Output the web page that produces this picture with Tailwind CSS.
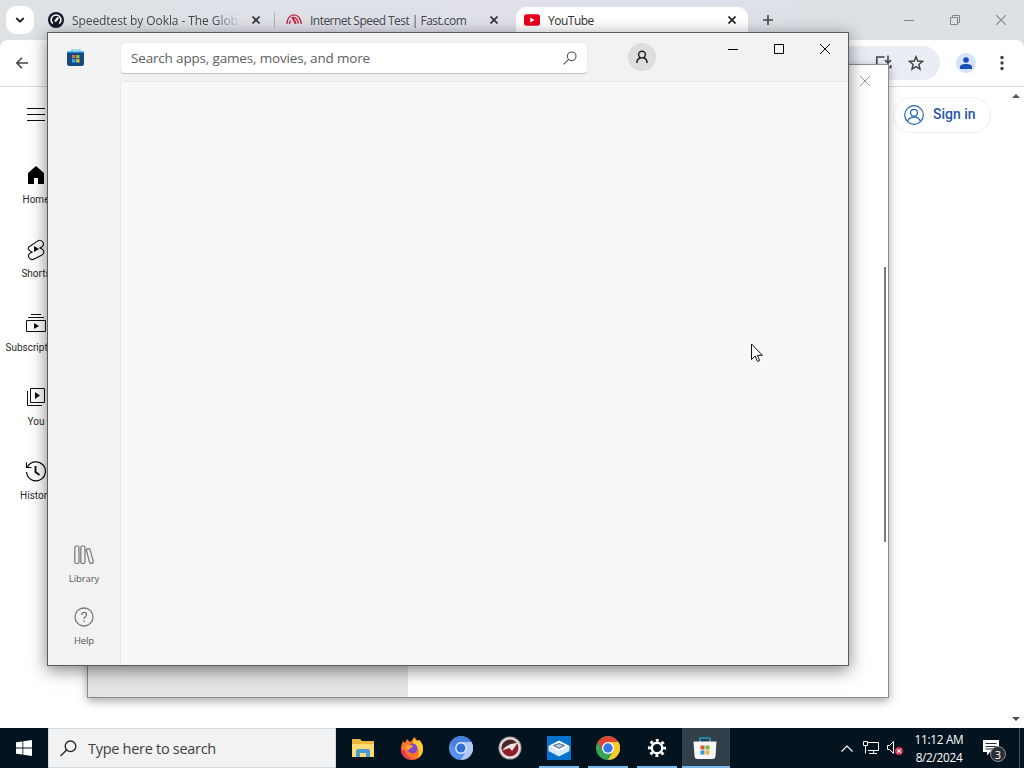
<!DOCTYPE html>
<html lang="en">
<head>
  <meta charset="UTF-8" />
  <meta name="viewport" content="width=device-width, initial-scale=1" />
  <title>Desktop</title>
  <script src="https://cdn.jsdelivr.net/npm/@tailwindcss/browser@4"></script>
</head>
<body class="overflow-hidden font-['Open_Sans','Noto_Sans',sans-serif]">
  <div class="relative flex h-[768px] w-[1024px] flex-col overflow-hidden bg-white">

    <!-- Browser tab strip -->
    <header class="flex h-10 shrink-0 items-start bg-gradient-to-r from-[#dee2e5] via-[#dfe0e9] to-[#dce1e3] text-[12px] text-[#45484c]">
      <button class="mt-[6px] ml-[6px] flex h-7 w-7 items-center justify-center rounded-[10px] bg-white">
        <svg class="h-3 w-3" viewBox="0 0 12 12" fill="none" stroke="#222" stroke-width="1.9"><path d="M2.3 4l3.7 3.7L9.7 4" /></svg>
      </button>
      <div class="ml-[14px] flex h-10 w-[226px] items-center">
        <svg class="h-4 w-4 shrink-0" viewBox="0 0 16 16" fill="none"><circle cx="8" cy="8" r="8" fill="#15182a" /><path d="M4.8 11.6a4.9 4.9 0 1 1 6.4 0" stroke="#fff" stroke-width="1.6" /><path d="M7 9.5l3.3-4" stroke="#fff" stroke-width="2" /></svg>
        <span class="mt-px ml-2 w-[168px] whitespace-nowrap tracking-[-0.08px] [mask-image:linear-gradient(to_right,#000_85%,transparent)]">Speedtest by Ookla - The Glob</span>
        <svg class="ml-3 h-2 w-2" viewBox="0 0 8 8" stroke="#333" stroke-width="1.6"><path d="M.5.5l7 7M7.5.5l-7 7" /></svg>
      </div>
      <div class="mt-3 h-4 w-px bg-[#b4b8bb]"></div>
      <div class="ml-[11px] flex h-10 w-[230px] items-center">
        <svg class="h-4 w-4 shrink-0" viewBox="0 0 16 16" fill="none" stroke="#c4203f" stroke-width="1.3"><path d="M.8 12C1.200 6 4.500 2.800 8 2.800S14.800 6 15.300 12" /><path d="M5.500 5.800c3.500-1.500 6 1 7 5.700M4.500 8.500L3.300 12" /><path d="M6.500 5.500l3.300 6.200" stroke-width="2" /></svg>
        <span class="mt-px ml-2 w-[172px] whitespace-nowrap tracking-[-0.53px]">Internet Speed Test | Fast.com</span>
        <svg class="ml-2 h-2 w-2" viewBox="0 0 8 8" stroke="#333" stroke-width="1.6"><path d="M.5.5l7 7M7.5.5l-7 7" /></svg>
      </div>
      <div class="mt-[7px] flex h-[33px] w-[232px] items-center rounded-t-[10px] bg-white px-2 pb-[7px] text-[#333]">
        <svg class="h-4 w-4" viewBox="0 0 16 16"><rect y="2.3" width="16" height="11.5" rx="2.5" fill="#e8001c" /><path d="M6.3 5.5v5L10.600 8z" fill="#fff" /></svg>
        <span class="mt-px ml-2 grow tracking-[-0.5px]">YouTube</span>
        <svg class="mr-1 h-2 w-2" viewBox="0 0 8 8" stroke="#222" stroke-width="1.7"><path d="M.5.5l7 7M7.5.5l-7 7" /></svg>
      </div>
      <svg class="mt-[15px] ml-[15px] h-[10px] w-[10px]" viewBox="0 0 10 10" stroke="#444" stroke-width="1.6"><path d="M5 0v10M0 5h10" /></svg>
      <div class="mt-[15px] mr-[18px] ml-auto flex items-center gap-9 text-[#808487]">
        <svg class="h-[10px] w-[10px]" viewBox="0 0 10 10" stroke="currentColor"><path d="M0 5.5h10" /></svg>
        <svg class="h-[10px] w-[10px]" viewBox="0 0 10 10" fill="none" stroke="currentColor"><path d="M.5 2.5h7v7h-7zM2.500 2.500v-2h7v7h-2" /></svg>
        <svg class="h-[10px] w-[10px]" viewBox="0 0 10 10" stroke="currentColor" stroke-width="1.1"><path d="M0 0l10 10M10 0L0 10" /></svg>
      </div>
    </header>

    <!-- Browser toolbar -->
    <div class="flex h-[47px] shrink-0 items-center border-b border-[#d8dadd] bg-[#dde1e4]">
      <div class="flex h-full w-full items-center rounded-t-lg bg-white pl-4">
        <svg class="h-3 w-3" viewBox="0 0 12 12" fill="none" stroke="#444" stroke-width="1.5"><path d="M12 6H1M6 .8L.9 6 6 11.200" /></svg>
        <div class="ml-[60px] flex h-[34px] w-[852px] items-center justify-end gap-4 rounded-full bg-[#ebedf5] pr-4">
          <svg class="h-4 w-4" viewBox="0 0 16 16" fill="none" stroke="#444" stroke-width="1.6"><path d="M8.500 2H.8v10.500h14V10M4 15h8M12 .5v7M9 5l3 3 3-3" /></svg>
          <svg class="h-4 w-4" viewBox="0 0 16 16" fill="none" stroke="#444" stroke-width="1.5"><path d="M8 1.800l1.800 4.300 4.700.4-3.600 3 1.100 4.600L8 11.700l-4 2.400 1.100-4.600-3.600-3 4.700-.4z" /></svg>
        </div>
        <div class="ml-4 flex h-5 w-5 items-center justify-center rounded-full bg-[#d5e2fa]">
          <svg class="h-3 w-3" viewBox="0 0 12 12" fill="#1a4fb8"><circle cx="6" cy="3" r="2.800" /><path d="M0 12V9.600C0 7.900 3 7 6 7s6 .9 6 2.600V12z" /></svg>
        </div>
        <svg class="ml-6 h-4 w-[4px]" viewBox="0 0 4 16" fill="#3c4043"><circle cx="2" cy="2.500" r="1.700" /><circle cx="2" cy="8" r="1.700" /><circle cx="2" cy="13.500" r="1.700" /></svg>
      </div>
    </div>

    <!-- YouTube page -->
    <main class="flex min-h-0 grow font-[Roboto,sans-serif]">
      <nav class="flex w-[72px] flex-col items-center text-[10px] leading-[14px] text-[#2a2a2a]">
        <svg class="mt-[20px] mb-[41px] h-[15px] w-[18px] shrink-0" viewBox="0 0 18 15" stroke="#0f0f0f"><path d="M0 1.500h18M0 7.500h18M0 13.500h18" /></svg>
        <div class="flex h-[74px] flex-col items-center gap-[6px]">
          <svg class="h-6 w-6" viewBox="0 0 24 24" fill="#000"><path d="M4 10v11h6v-6h4v6h6V10l-8-7z" /></svg>
          <span>Home</span>
        </div>
        <div class="flex h-[74px] flex-col items-center gap-[6px]">
          <svg class="h-6 w-6" viewBox="0 0 24 24" fill="none" stroke="#0f0f0f" stroke-width="1.100"><path d="M6 9.200l7.800-5.300c3.900-2.100 7.800 3 4.200 5.800l-2.100 1.300 2 .9c3 1.700 2.300 4.700.1 6l-7.800 4.200c-3.900 2-7.800-3-4.200-5.800L8.100 15l-2-.9c-3-1.700-2.200-4 0-4.900z" /><path d="M10 9v6l5-3z" fill="#0f0f0f" stroke="none" /></svg>
          <span>Shorts</span>
        </div>
        <div class="flex h-[74px] flex-col items-center gap-[6px]">
          <svg class="h-6 w-6" viewBox="0 0 24 24" fill="none" stroke="#0f0f0f"><path d="M2.500 9.500h19v11h-19zM4 6.500h16M7 3.500h10" /><path d="M10 12v6l5-3z" fill="#0f0f0f" stroke="none" /></svg>
          <span>Subscriptions</span>
        </div>
        <div class="flex h-[74px] flex-col items-center gap-[6px]">
          <svg class="h-6 w-6" viewBox="0 0 24 24" fill="none" stroke="#0f0f0f"><path d="M6.500 3.500h14v14h-14zM3.500 6v14.500H18" /><path d="M11 7v7l5-3.500z" fill="#0f0f0f" stroke="none" /></svg>
          <span>You</span>
        </div>
        <div class="flex h-[74px] flex-col items-center gap-[6px]">
          <svg class="h-6 w-6" viewBox="0 0 24 24" fill="none" stroke="#0f0f0f"><path d="M3.500 8A9.500 9.500 0 1 1 2.500 13M2.500 3.500v5h5" stroke-width="1.200" /><path d="M11.500 7v6l4 3" stroke-width="1.900" /></svg>
          <span>History</span>
        </div>
      </nav>
      <div class="mt-[10px] mr-4 ml-auto flex h-9 w-[98px] items-center rounded-full border border-[#eceef0] pl-[10px]">
        <svg class="h-5 w-5" viewBox="0 0 20 20" fill="none" stroke="#2563b0" stroke-width="1.200"><circle cx="10" cy="10" r="9.300" /><circle cx="10" cy="7.800" r="3.400" /><path d="M3.600 16.600c1.300-6 11.500-6 12.800 0" /></svg>
        <span class="mb-[2px] ml-[9px] text-[14px] font-medium text-[#2456a6]">Sign in</span>
      </div>
      <div class="flex w-[17px] flex-col items-center justify-between pt-[7px] pb-[7px]">
        <svg class="h-1 w-2" viewBox="0 0 8 4" fill="#505050"><path d="M4 0l4 4H0z" /></svg>
        <svg class="h-1 w-2" viewBox="0 0 8 4" fill="#505050"><path d="M0 0h8L4 4z" /></svg>
      </div>
    </main>

    <!-- Settings window behind the store -->
    <section class="absolute top-[64px] left-[87px] flex h-[634px] w-[802px] border border-[#8c8c8c] bg-white shadow-[0_3px_9px_rgba(0,0,0,0.35)]">
      <div class="w-80 bg-[#e5e5e5]"></div>
      <div class="flex grow flex-col items-end">
        <svg class="mt-[11px] mr-[18px] h-[10px] w-[10px]" viewBox="0 0 10 10" stroke="#999"><path d="M0 0l10 10M10 0L0 10" /></svg>
        <div class="mt-[181px] mr-[2px] h-[275px] w-[2px] bg-[#7a7a7a]"></div>
      </div>
    </section>

    <!-- Microsoft Store window -->
    <section class="absolute top-[32px] left-[47px] flex h-[634px] w-[802px] flex-col border border-[#5c5c5c] bg-[#f2f2f2] shadow-[0_4px_16px_rgba(0,0,0,0.5)]">
      <div class="flex h-[48px] shrink-0 items-start">
        <svg class="mt-4 ml-[19px] h-[18px] w-[18px]" viewBox="0 0 18 18"><path d="M5 3V1h8v2" fill="none" stroke="#58c6f0" stroke-width="1.200" /><path d="M0 3h17v11.500a2.500 2.500 0 0 1-2.500 2.500h-12A2.500 2.500 0 0 1 0 14.500z" fill="#154a80" /><path d="M0 2.500h17v1.500H0z" fill="#1b8ad0" /><path d="M5 6h3.300v3.300H5z" fill="#d0703f" /><path d="M9.200 6h3.300v3.300H9.200z" fill="#91bd3f" /><path d="M5 10.200h3.300v3.300H5z" fill="#38aee0" /><path d="M9.200 10.200h3.300v3.300H9.200z" fill="#f2bd32" /></svg>
        <div class="mt-[10px] ml-[36px] flex h-[31px] w-[466px] items-center rounded-[4px] border-b border-[#c9c9c9] bg-white pr-[10px] pl-[10px] shadow-[0_0_1px_rgba(0,0,0,0.25)]">
          <span class="grow text-[13.500px] tracking-[-0.17px] whitespace-nowrap text-[#5e5e5e]">Search apps, games, movies, and more</span>
          <svg class="h-[14px] w-[14px]" viewBox="0 0 14 14" fill="none" stroke="#555" stroke-width="1.100"><circle cx="8.700" cy="5.300" r="4.300" /><path d="M5.600 8.400L.7 13.300" /></svg>
        </div>
        <div class="mt-[10px] ml-[41px] flex h-7 w-7 items-center justify-center rounded-full bg-[#dddddd]">
          <svg class="h-[14px] w-[14px]" viewBox="0 0 14 14" fill="none" stroke="#222" stroke-width="1.500"><circle cx="7" cy="4.600" r="3.400" /><path d="M1.800 13c.2-3 1.800-4.700 3.700-5.300M12.200 13c-.2-3-1.800-4.700-3.700-5.300" /></svg>
        </div>
        <div class="mt-[11px] mr-[18px] ml-auto flex gap-9">
          <svg class="h-[10px] w-[10px]" viewBox="0 0 10 10" stroke="#000"><path d="M0 5.500h10" /></svg>
          <svg class="h-[10px] w-[10px]" viewBox="0 0 10 10" fill="none" stroke="#000"><path d="M.5.5h9v9h-9z" /></svg>
          <svg class="h-[10px] w-[10px]" viewBox="0 0 10 10" stroke="#000"><path d="M0 0l10 10M10 0L0 10" /></svg>
        </div>
      </div>
      <div class="flex grow">
        <aside class="flex w-[72px] flex-col items-center justify-end gap-[21px] pb-[17px] text-[9.500px] leading-[14px] tracking-[-0.1px] text-[#555]">
          <div class="flex flex-col items-center gap-[7px]">
            <svg class="h-5 w-5" viewBox="0 0 20 20" fill="none" stroke="#777" stroke-width="1.200"><rect x=".8" y="1" width="4.200" height="17.500" rx="1.400" /><rect x="6.800" y="1" width="4.200" height="17.500" rx="1.400" /><rect x="14" y="3.500" width="3.700" height="15" rx="1.400" transform="rotate(-15 15.800 11)" /></svg>
            <span>Library</span>
          </div>
          <div class="flex flex-col items-center gap-[7px]">
            <svg class="h-5 w-5" viewBox="0 0 20 20" fill="none" stroke="#777" stroke-width="1.300"><circle cx="10" cy="10" r="9" /><path d="M7.700 8c0-3.500 4.800-3.200 4.800-.3 0 2-2.500 2-2.500 4.300M10 13.500v1.500" /></svg>
            <span>Help</span>
          </div>
        </aside>
        <div class="grow rounded-tl-[4px] border-t border-l border-[#e9e9e9] bg-[#f8f8f8]"></div>
      </div>
    </section>

    <!-- Mouse pointer -->
    <svg class="absolute top-[343px] left-[751px] h-5 w-3" viewBox="0 0 12 20" fill="#fff" stroke="#111"><path d="M.5 1v15.500l3.700-3.500 2.300 5.500 2.200-1-2.300-5.200h5z" /></svg>

    <!-- Taskbar -->
    <footer class="flex h-10 shrink-0 bg-[#03131f]">
      <div class="flex w-12 items-center justify-center">
        <svg class="h-4 w-4" viewBox="0 0 16 16" fill="#fff"><path d="M0 2.300l6.500-.9v6.200H0zM7.300 1.300L16 0v7.600H7.300zM0 8.400h6.500v6.200L0 13.700zM7.300 8.400H16V16l-8.700-1.300z" /></svg>
      </div>
      <div class="flex w-[288px] items-center border border-[#d3d8dc] bg-[#f2f2f2] pl-[11px]">
        <svg class="h-[17px] w-[17px]" viewBox="0 0 17 17" fill="none" stroke="#222" stroke-width="1.300"><circle cx="10.500" cy="6.300" r="5.300" /><path d="M6.600 10L.6 16" /></svg>
        <span class="mt-[2px] ml-[11px] text-[14.500px] tracking-[-0.02em] text-[#404040]">Type here to search</span>
      </div>
      <div class="ml-[2px] flex">
        <div class="flex w-[49px] items-center justify-center">
          <svg class="h-6 w-6" viewBox="0 0 24 24"><path d="M1 3h8l2 2h12v16H1z" fill="#e9b93a" /><path d="M1 8h22v13H1z" fill="#fbdc72" /><path d="M5 21v-6.500L6.500 13h11l1.500 1.500V21h-4v-4H9v4z" fill="#4a9bd5" /></svg>
        </div>
        <div class="flex w-[49px] items-center justify-center">
          <svg class="h-6 w-6" viewBox="0 0 24 24"><path d="M3 5l2 2 2-4 3 3c2-1 3-4 5-5 0 2 2 3 3 4l1-1c3 3 4 5 4 9 0 7-5 11-11 11S1 20 1 13c0-3 1-5 2-8z" fill="#ff7426" /><path d="M14 1c0 2 2 3 3 4l2-1c3 3 4 5 4 9 0 4-2 7-5 9 2-7 0-11-5-14z" fill="#ffcb36" /><path d="M1 13c0 8 8 12 15 10-6 0-10-3-11-8z" fill="#ee3259" /><circle cx="12.500" cy="12.500" r="5" fill="#8048cf" /><path d="M5 10c3-2 5-1 8 0-1 2-3 2-4 4-2 0-4-2-4-4z" fill="#ffa32d" /></svg>
        </div>
        <div class="flex w-[49px] items-center justify-center">
          <svg class="h-6 w-6" viewBox="0 0 24 24"><circle cx="12" cy="12" r="12" fill="#5990e8" /><path d="M12 6h10.500A12 12 0 0 1 12 24l5-9z" fill="#acc9f7" /><path d="M1.700 6a12 12 0 0 1 20.700 0H12l-5 9z" fill="#4680df" /><circle cx="12" cy="12" r="5.900" fill="#e5effe" /><circle cx="12" cy="12" r="4.500" fill="#2f70d8" /></svg>
        </div>
        <div class="flex w-[49px] items-center justify-center">
          <svg class="h-6 w-6" viewBox="0 0 24 24"><circle cx="12" cy="12" r="11.500" fill="#a9a5a5" /><circle cx="12" cy="12" r="10.300" fill="#eee5e5" /><circle cx="12" cy="12" r="8.500" fill="#8e1f2d" /><path d="M3.500 12A8.500 8.500 0 0 1 19 7.500L12 9l-8 6z" fill="#4a2a2d" /><path d="M4 14.500C8 9 13 7.500 19.500 7L14 15l-2.500-3z" fill="#efe3e3" /></svg>
        </div>
        <div class="flex w-[49px] flex-col items-center">
          <svg class="mt-2 mb-[6px] h-6 w-6" viewBox="0 0 24 24"><path d="M0 0h24v24H0z" fill="#0873cf" /><path d="M1.500 10v5L12 20.500 22.500 15v-5z" fill="#d4eafc" /><path d="M1.500 10L12 4.500 22.500 10 12 15.500z" fill="#fff" /><path d="M6.500 9.500l5.500 2.800 5.500-2.800L12 7.500z" fill="#a9cbe6" stroke="#43576c" stroke-width=".9" /></svg>
          <div class="h-[2px] w-10 bg-[#76b9ed]"></div>
        </div>
        <div class="flex w-[49px] flex-col items-center">
          <svg class="mt-2 mb-[6px] h-6 w-6" viewBox="0 0 24 24"><circle cx="12" cy="12" r="12" fill="#33a354" /><path d="M12 6h10.500A12 12 0 0 1 12 24l5.200-9z" fill="#fbc92e" /><path d="M1.700 6a12 12 0 0 1 20.700 0H12l-5.200 9z" fill="#e14335" /><circle cx="12" cy="12" r="6" fill="#fff" /><circle cx="12" cy="12" r="4.700" fill="#3478e5" /></svg>
          <div class="h-[2px] w-10 bg-[#76b9ed]"></div>
        </div>
        <div class="flex w-[49px] flex-col items-center">
          <svg class="mt-[10px] mb-2 h-5 w-5" viewBox="0 0 20 20" fill="none" stroke="#fff"><circle cx="10" cy="10" r="5.300" stroke-width="2.400" /><circle cx="10" cy="10" r="7.600" stroke-width="3" stroke-dasharray="2.800 3.169" stroke-dashoffset="1.400" /></svg>
          <div class="h-[2px] w-10 bg-[#76b9ed]"></div>
        </div>
        <div class="ml-px flex w-12 flex-col items-center bg-[#333f49]">
          <svg class="mt-2 mr-[2px] mb-[6px] h-6 w-6" viewBox="0 0 24 24"><path d="M7 6V2h10v4" fill="none" stroke="#2497c9" stroke-width="1.600" /><path d="M.5 5.500h23L22.500 20.500a3 3 0 0 1-3 2.500h-15a3 3 0 0 1-3-2.500z" fill="#f6f6f6" /><path d="M7.500 9.500h4v4h-4z" fill="#df5131" /><path d="M12.500 9.500h4v4h-4z" fill="#7db43a" /><path d="M7.500 14.500h4v4h-4z" fill="#2c9bd5" /><path d="M12.500 14.500h4v4h-4z" fill="#eeb42d" /></svg>
          <div class="h-[2px] w-full bg-[#76b9ed]"></div>
        </div>
      </div>
      <div class="ml-auto flex items-center text-white">
        <svg class="h-[7px] w-3" viewBox="0 0 12 7" fill="none" stroke="#fff" stroke-width="1.200"><path d="M.5 6.500L6 1l5.500 5.500" /></svg>
        <svg class="ml-[10px] h-4 w-4" viewBox="0 0 16 16" fill="none" stroke="#fff"><path d="M5 2.500h10.500v8H5M.5 1.500h4v4h-4zM2.500 5.500v8M10.500 10.500v3M6 13.500h8" /></svg>
        <svg class="ml-2 h-4 w-4" viewBox="0 0 16 16" fill="none" stroke="#fff"><path d="M.5 5.500h2l4-4v12l-4-4h-2z" /><circle cx="12" cy="11" r="4" fill="#d8384c" stroke="none" /><path d="M10.300 9.300l3.400 3.400M13.700 9.300l-3.400 3.400" stroke-width="1.200" /></svg>
        <div class="ml-2 flex w-[56px] flex-col items-center text-[11.800px] leading-[18px] tracking-[-0.3px] whitespace-nowrap">
          <span>11:12 AM</span>
          <span>8/2/2024</span>
        </div>
        <div class="relative ml-4 h-6 w-6">
          <svg class="mt-1 h-4 w-4" viewBox="0 0 16 16"><path d="M0 0h16v12H7l-3 3.500V12H0z" fill="#fff" /><path d="M2.500 3.500h11M2.500 6.500h11M2.500 9h8" stroke="#23303b" /></svg>
          <span class="absolute top-[10px] left-[7px] flex h-4 w-4 items-center justify-center rounded-full border border-[#8c9298] bg-[#292f35] text-[11px] leading-none">3</span>
        </div>
        <div class="ml-[12px] h-10 w-px bg-[#46525c]"></div>
        <div class="w-1"></div>
      </div>
    </footer>
  </div>
</body>
</html>
